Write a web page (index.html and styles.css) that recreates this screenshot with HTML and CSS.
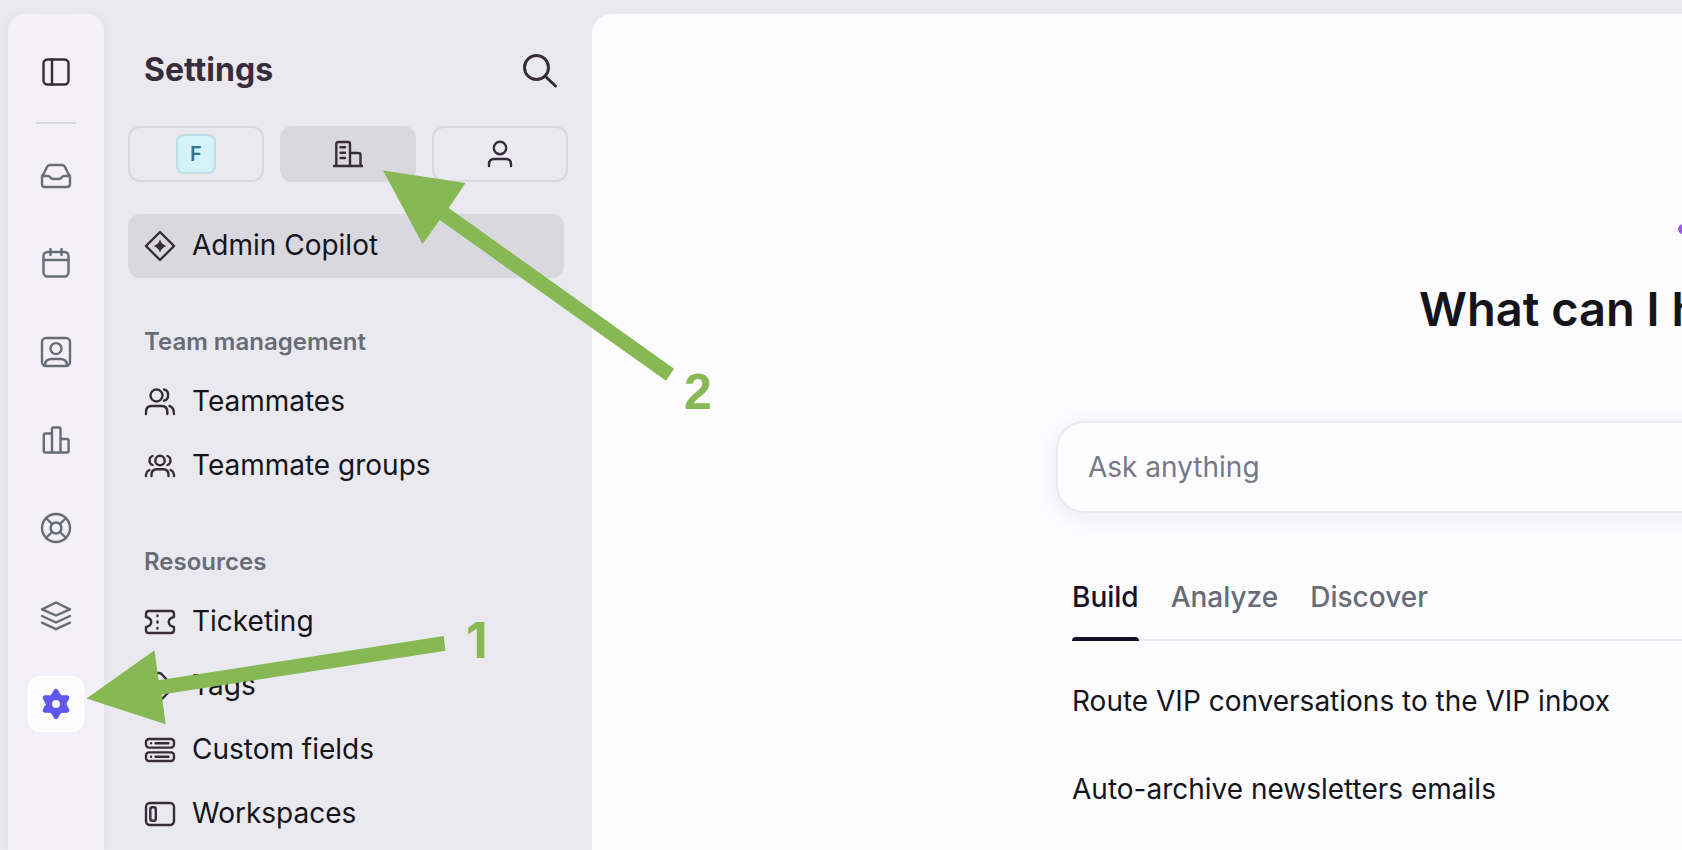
FILE: index.html
```html
<!DOCTYPE html>
<html lang="en">

<head>
    <meta charset="utf-8">
    <title>Settings</title>
    <link rel="stylesheet" href="styles.css">
</head>

<body>
    <div class="app">
        <nav class="rail">
            <button class="rail-btn" type="button" aria-label="Toggle sidebar">
                <svg class="icon dark" viewBox="0 0 32 32"><rect x="3.5" y="3.5" width="25" height="25" rx="4" /><path d="M12 3.5v25" /></svg>
            </button>
            <hr class="rail-line">
            <div class="rail-links">
                <a class="rail-btn" href="#" aria-label="Inbox">
                    <svg class="icon" viewBox="0 0 32 32"><path d="M2 17L7 7Q8 5 10 5H22Q24 5 25 7L30 17V24Q30 27 27 27H5Q2 27 2 24Z" /><path d="M2 16H8C11 16 10 19 13 19H19C22 19 21 16 24 16H30" /></svg>
                </a>
                <a class="rail-btn" href="#" aria-label="Calendar">
                    <svg class="icon" viewBox="0 0 32 32"><rect x="3.5" y="4" width="25" height="24.500" rx="4" /><path d="M3.500 12h25M10.500 1v6M21.500 1v6" /></svg>
                </a>
                <a class="rail-btn" href="#" aria-label="Contacts">
                    <svg class="icon" viewBox="0 0 32 32"><rect x="2" y="2" width="28" height="28" rx="4" /><circle cx="16" cy="12.600" r="5.500" /><path d="M5 29C5 25 8 23 12 23H20C24 23 27 25 27 29" /></svg>
                </a>
                <a class="rail-btn" href="#" aria-label="Analytics">
                    <svg class="icon" viewBox="0 0 32 32"><path d="M12 9.500H5.500Q3.800 9.500 3.800 11V27Q3.800 28.500 5.500 28.500H27Q28.600 28.500 28.600 27V16.500Q28.600 15 27 15H20.500M12 28.500V5Q12 3.500 13.500 3.500H19Q20.500 3.500 20.500 5V28.500" /></svg>
                </a>
                <a class="rail-btn" href="#" aria-label="Knowledge base">
                    <svg class="icon" viewBox="0 0 32 32"><circle cx="16" cy="16" r="14" /><circle cx="16" cy="16" r="5.500" /><path d="M6 6l6 6M26 6l-6 6M6 26l6-6M26 26l-6-6" /></svg>
                </a>
                <a class="rail-btn" href="#" aria-label="Apps">
                    <svg class="icon" viewBox="0 0 32 32"><path d="M16 2.500L30 9.300L16 15.500L2 9.300Z" /><path d="M2 16L16 22.500L30 16M2 22.700L16 29.200L30 22.700" /></svg>
                </a>
                <a class="rail-btn active" href="#" aria-label="Settings">
                    <svg class="icon" viewBox="0 0 32 32"><path class="gear" d="M16 3.500L19.700 9.600L26.800 9.750L23.400 16L26.800 22.250L19.700 22.400L16 28.500L12.300 22.400L5.200 22.250L8.600 16L5.200 9.750L12.300 9.600Z" /><circle class="gear-hole" cx="16" cy="16" r="4" /></svg>
                </a>
            </div>
        </nav>

        <aside class="sidebar">
            <div class="sidebar-head">
                <h1>Settings</h1>
                <button class="search" type="button" aria-label="Search">
                    <svg viewBox="0 0 36 36"><circle cx="14.500" cy="15.500" r="12" /><path d="M23.500 24.500L33.500 34" /></svg>
                </button>
            </div>
            <div class="scopes">
                <button class="scope" type="button"><span class="avatar">F</span></button>
                <button class="scope active" type="button" aria-label="Company">
                    <svg class="icon dark" viewBox="0 0 32 32"><path d="M4.300 28V6Q4.300 4 6.300 4H16Q18 4 18 6V28M18 15H26.500Q28.500 15 28.500 17V28M2 28H30M8.500 9.300H13M8.500 14.700H13M8.500 20H13" /></svg>
                </button>
                <button class="scope" type="button" aria-label="Personal">
                    <svg class="icon dark" viewBox="0 0 32 32"><circle cx="16" cy="10" r="6.200" /><path d="M5 28V26.500Q5 21 10 21H22Q27 21 27 26.500V28" /></svg>
                </button>
            </div>
            <ul class="menu">
                <li><a class="active" href="#">
                    <svg class="icon dark" viewBox="0 0 32 32"><path d="M16 2L30 16L16 30L2 16Z" /><path class="solid" d="M16 9.500Q17.500 14.500 22.500 16Q17.500 17.500 16 22.500Q14.500 17.500 9.500 16Q14.500 14.500 16 9.500Z" /></svg>
                    <span>Admin Copilot</span></a></li>
            </ul>
            <h2>Team management</h2>
            <ul class="menu">
                <li><a href="#">
                    <svg class="icon dark" viewBox="0 0 32 32"><circle cx="12.500" cy="9.500" r="6" /><path d="M2 28V26Q2 20 7.500 20H18Q23.300 20 23.300 26V28M20 3.500C25.500 4.500 25.500 13.500 20 14.700M25.500 20C29 21 30 24 30 28" /></svg>
                    <span>Teammates</span></a></li>
                <li><a href="#">
                    <svg class="icon dark" viewBox="0 0 32 32"><circle cx="16" cy="10.500" r="4.700" /><path d="M7.500 26V25Q7.500 19.300 13 19.300H19Q24.500 19.300 24.500 25V26M8.500 6C4.500 7.500 4.500 13.500 8.500 15M23.500 6C27.500 7.500 27.500 13.500 23.500 15M2 26C2 23 3 21 5.500 20M30 26C30 23 29 21 26.500 20" /></svg>
                    <span>Teammate groups</span></a></li>
            </ul>
            <h2>Resources</h2>
            <ul class="menu">
                <li><a href="#">
                    <svg class="icon dark" viewBox="0 0 32 32"><path d="M5 5H27Q30 5 30 8V11C23 12.500 23 19.500 30 21V24Q30 27 27 27H5Q2 27 2 24V21C9 19.500 9 12.500 2 11V8Q2 5 5 5Z" /><path d="M13.500 9.500v.5M13.500 15.500v1M13.500 22v.5" /></svg>
                    <span>Ticketing</span></a></li>
                <li><a href="#">
                    <svg class="icon dark" viewBox="0 0 32 32"><path d="M3 5Q3 3 5 3H15Q16.500 3 17.500 4L28 15.500Q29.500 17 28 18.500L19 28Q17.500 29.500 16 28L4 16Q3 15 3 13.500Z" /><circle cx="9.500" cy="9.500" r="1" /></svg>
                    <span>Tags</span></a></li>
                <li><a href="#">
                    <svg class="icon dark" viewBox="0 0 32 32"><rect x="2" y="5" width="28" height="8.600" rx="3" /><rect x="2" y="18.400" width="28" height="8.600" rx="3" /><path d="M7 9.300h.1M11.500 9.300h13M7 22.700h.1M11.500 22.700h13" /></svg>
                    <span>Custom fields</span></a></li>
                <li><a href="#">
                    <svg class="icon dark" viewBox="0 0 32 32"><rect x="2" y="5" width="28" height="22" rx="4" /><rect x="6.300" y="9.200" width="5.500" height="13.600" rx="2" /></svg>
                    <span>Workspaces</span></a></li>
            </ul>
        </aside>

        <main class="main">
            <div class="content">
                <div class="hero">
                    <svg class="sparkle" viewBox="0 0 96 96"><path d="M48 6Q56 40 90 48Q56 56 48 90Q40 56 6 48Q40 40 48 6Z" /></svg>
                    <h2>What can I help</h2>
                </div>
                <input class="ask" type="text" placeholder="Ask anything" aria-label="Ask anything">
                <div class="tabs">
                    <button class="tab active" type="button">Build</button>
                    <button class="tab" type="button">Analyze</button>
                    <button class="tab" type="button">Discover</button>
                </div>
                <ul class="prompts">
                    <li><a href="#">Route VIP conversations to the VIP inbox</a></li>
                    <li><a href="#">Auto-archive newsletters emails</a></li>
                </ul>
            </div>
        </main>

        <!-- numbered steps drawn over the page -->
        <svg class="steps" width="760" height="760" viewBox="0 0 760 760">
            <polygon points="383,170.500 465.500,183 448.700,208 674,368.700 666,380.700 439.700,220 422.500,244" />
            <polygon points="86.500,698.500 154.500,650.300 158.500,680.300 443.700,636 445.500,650.700 161.700,694.500 165.700,724.300" />
            <text class="one" x="466" y="658">1</text>
            <text x="684" y="409">2</text>
        </svg>
    </div>
</body>

</html>
```
FILE: styles.css
```css
* {
    box-sizing: border-box;
    margin: 0;
    padding: 0;
}

body {
    background: #eae9ef;
    color: #15141a;
    font-family: Inter, "Liberation Sans", sans-serif;
    font-size: 28px;
    line-height: 40px;
    overflow: hidden;
}

a {
    color: inherit;
    text-decoration: none;
}

ul {
    list-style: none;
}

button {
    border: 0;
    background: none;
    font: inherit;
    color: inherit;
    cursor: pointer;
}

.app {
    position: relative;
    display: flex;
    height: 100vh;
    padding: 14px 0 0 8px;
    overflow: hidden;
}

.icon {
    flex: none;
    width: 32px;
    height: 32px;
    fill: none;
    stroke: #686c76;
    stroke-width: 2.4;
    stroke-linecap: round;
    stroke-linejoin: round;
}

.icon.dark {
    stroke: #362c3a;
}

.icon .solid {
    fill: #362c3a;
    stroke: none;
}

/* left rail */
.rail {
    display: flex;
    flex: none;
    flex-direction: column;
    align-items: center;
    width: 96px;
    padding-top: 30px;
    background: #f3f0f7;
    border-radius: 16px 16px 0 0;
    box-shadow: 0 0 12px rgba(40, 30, 60, 0.04);
}

.rail-btn {
    display: flex;
    flex: none;
    align-items: center;
    justify-content: center;
    width: 56px;
    height: 56px;
    border-radius: 12px;
}

.rail-btn.active {
    background: #fcfcfe;
    border: 2px solid #fff;
}

.rail-line {
    width: 40px;
    height: 2px;
    margin: 22px 0 24px;
    border: 0;
    background: #d8d7dc;
}

.rail-links {
    display: flex;
    flex-direction: column;
    gap: 32px;
}

.gear {
    fill: #5e58ee;
    stroke: #5e58ee;
    stroke-width: 5;
}

.gear-hole {
    fill: #fcfcfe;
    stroke: none;
}

/* settings menu */
.sidebar {
    flex: none;
    width: 488px;
    padding: 36px 24px 0;
}

.sidebar-head {
    display: flex;
    align-items: center;
    justify-content: space-between;
    height: 40px;
    padding: 0 10px 0 16px;
    margin-bottom: 36px;
}

.sidebar-head h1 {
    color: #362c3a;
    font-size: 32px;
    font-weight: 700;
}

.search {
    width: 36px;
    height: 36px;
}

.search svg {
    display: block;
    fill: none;
    stroke: #362c3a;
    stroke-width: 3;
    stroke-linecap: round;
}

.scopes {
    display: flex;
    gap: 16px;
    margin-bottom: 32px;
}

.scope {
    display: flex;
    flex: 1;
    align-items: center;
    justify-content: center;
    height: 56px;
    border: 2px solid #d8d7dc;
    border-radius: 12px;
}

.scope.active {
    background: #d9d8de;
}

.avatar {
    width: 40px;
    height: 40px;
    border: 2px solid #bfdfe6;
    border-radius: 8px;
    background: #d5f2f8;
    color: #357486;
    font-size: 20px;
    font-weight: 600;
    line-height: 36px;
}

.sidebar h2 {
    margin: 48px 16px 12px;
    color: #686c76;
    font-size: 24px;
    font-weight: 600;
    line-height: 32px;
}

.menu a {
    display: flex;
    align-items: center;
    gap: 16px;
    height: 64px;
    padding: 0 16px;
    margin-right: 4px;
    border-radius: 12px;
}

.menu span {
    padding-bottom: 2px;
}

.menu a.active {
    background: #d9d8de;
}

/* copilot page */
.main {
    flex: 1;
    min-width: 0;
    padding: 167px 0 0 464px;
    background: #fcfcfe;
    border-radius: 20px 0 0 0;
    overflow: hidden;
}

/* the column runs on past the right edge */
.content {
    margin-right: -60px;
}

.hero {
    padding-left: 363px;
    margin-bottom: 84px;
    white-space: nowrap;
}

.sparkle {
    display: block;
    width: 96px;
    height: 96px;
    margin: 0 0 4px 258px;
    fill: #9a5cec;
    stroke: #9a5cec;
    stroke-width: 10;
    stroke-linejoin: round;
}

.hero h2 {
    font-size: 47px;
    font-weight: 600;
    line-height: 56px;
}

.ask {
    display: block;
    width: 100%;
    height: 92px;
    padding: 0 30px;
    border: 2px solid #eae9f0;
    border-radius: 28px;
    background: #fdfdff;
    box-shadow: 0 4px 20px rgba(20, 20, 40, 0.07);
    font: inherit;
}

.ask::placeholder {
    color: #767886;
}

.tabs {
    display: flex;
    gap: 32px;
    margin: 64px 16px 0;
    border-bottom: 2px solid #eae9f0;
}

.tab {
    position: relative;
    padding-bottom: 22px;
    color: #686c76;
    font-weight: 500;
}

.tab.active {
    color: #121127;
}

.tab.active::after {
    content: "";
    position: absolute;
    left: 0;
    right: 0;
    bottom: -2px;
    height: 4px;
    border-radius: 4px 4px 0 0;
    background: #121127;
}

.prompts {
    padding: 16px 16px 0;
}

.prompts a {
    display: block;
    padding: 24px 0;
}

/* arrows and numbers */
.steps {
    position: absolute;
    top: 0;
    left: 0;
    fill: #86b953;
    pointer-events: none;
}

.steps text {
    font-family: "Liberation Sans", sans-serif;
    font-size: 50px;
    font-weight: 700;
}

.steps .one {
    font-family: Inter, sans-serif;
}
```
